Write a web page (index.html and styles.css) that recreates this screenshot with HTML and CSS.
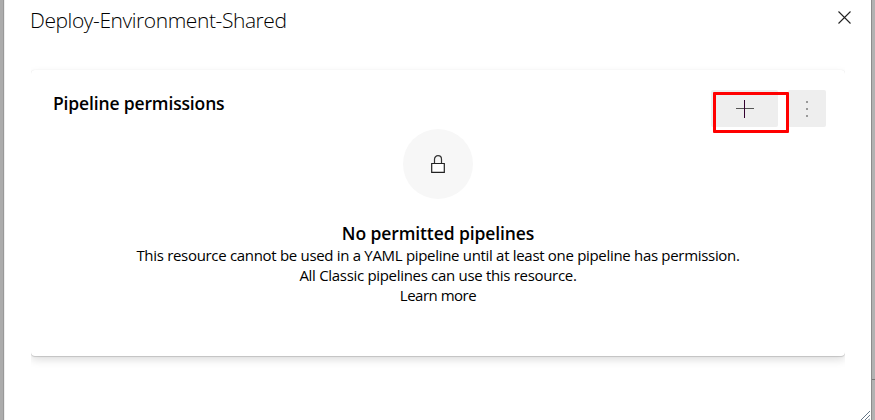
FILE: index.html
```html
<!DOCTYPE html>
<html lang="en">
  <head>
    <meta charset="utf-8" />
    <meta name="viewport" content="width=device-width, initial-scale=1.0" />
    <title>Deploy-Environment-Shared</title>
    <link rel="stylesheet" href="styles.css">
  </head>
  <body>
    <div class="panel">
      <div class="panel-header">
        <h1 class="panel-title">Deploy-Environment-Shared</h1>
        <button class="close-button" aria-label="Close">
          <svg width="13" height="13" viewBox="0 0 13 13">
            <path d="M.5 .5l12 12M12.5 .5l-12 12" />
          </svg>
        </button>
      </div>

      <div class="card-wrap">
        <div class="card">
          <div class="card-header">
            <h2 class="card-title">Pipeline permissions</h2>
            <div class="actions">
              <button class="button add-button" aria-label="Add pipeline">
                <svg width="18" height="18" viewBox="0 0 18 18">
                  <path class="plus-h" d="M0 8.5h18" />
                  <path class="plus-v" d="M8.5 0v18" />
                </svg>
                <span class="highlight"></span>
              </button>
              <button class="button more-button" aria-label="More options">
                <svg width="2" height="16" viewBox="0 0 2 16">
                  <path d="M0 0h2v2H0zM0 7h2v2H0zM0 14h2v2H0z" />
                </svg>
              </button>
            </div>
          </div>

          <div class="empty">
            <div class="empty-icon">
              <svg width="14" height="18" viewBox="0 0 14 18">
                <path class="shackle" d="M3.5 8V4.2a3.5 3.5 0 0 1 7 0V8" />
                <path class="lock-body" d="M.7 8.5h12.6v8.8H.7z" />
              </svg>
            </div>
            <div class="empty-title">No permitted pipelines</div>
            <div class="empty-text">This resource cannot be used in a YAML pipeline until at least one pipeline has permission.</div>
            <div class="empty-text">All Classic pipelines can use this resource.</div>
            <a class="empty-text empty-link">Learn more</a>
          </div>
        </div>
      </div>

      <svg class="resize-grip" width="9" height="9" viewBox="0 0 9 9">
        <path d="M0 9L9 0M4 9l5-5M7.5 9L9 7.5" />
      </svg>
    </div>
    <div class="page-edge"></div>
  </body>
</html>
```

FILE: styles.css
```css
* {
  box-sizing: border-box;
}

body {
  margin: 0;
  height: 420px;
  display: flex;
  overflow: hidden;
  background-color: #acacac;
  color: #000000;
  font-family: "Open Sans", "Noto Sans", sans-serif;
}

.panel {
  position: relative;
  flex: 1;
  margin-left: 3px;
  border-left: 1px solid #999999;
  background-color: #ffffff;
  box-shadow: inset 1px 0 #eeeeee;
}

.page-edge {
  width: 4px;
  border-left: 1px solid #8c8c8c;
  background: linear-gradient(#777777, #777777) 0 379px / 4px 1px no-repeat #b2b2b2;
}

.panel-header {
  display: flex;
  justify-content: space-between;
  height: 60px;
  padding: 6px 20px 0 26px;
}

.panel-title {
  margin: 0;
  font-size: 21px;
  font-weight: 300;
  line-height: 28px;
  letter-spacing: -0.42px;
}

.close-button {
  display: flex;
  height: 13px;
  margin-top: 5px;
  padding: 0;
  border: none;
  background: none;
}

.close-button path {
  stroke: #222222;
  stroke-width: 1.1;
}

/* the sides of the card shadow are cut off here */
.card-wrap {
  margin: 0 26px 0 27px;
  padding: 10px 0 16px;
  overflow: hidden;
}

.card {
  height: 286px;
  padding: 20px 19px 0 22px;
  border-radius: 4px;
  box-shadow: 0 0 1px rgba(0, 0, 0, 0.12), 0 1px 1px rgba(0, 0, 0, 0.14), 0 4px 8px rgba(0, 0, 0, 0.13);
}

.card-header {
  display: flex;
  justify-content: space-between;
  height: 39px;
}

.card-title {
  margin: 0;
  font-size: 17.5px;
  font-weight: 600;
  line-height: 27px;
  letter-spacing: -0.15px;
}

.actions {
  display: flex;
  gap: 10px;
}

.button {
  display: flex;
  height: 37px;
  padding: 0;
  border: none;
  border-radius: 2px;
  background-color: #eeeeee;
}

.add-button {
  position: relative;
  width: 67px;
  padding: 10px 0 0 25px;
}

.plus-h {
  stroke: #555555;
}

.plus-v {
  stroke: #33002f;
}

.highlight {
  position: absolute;
  top: 2px;
  left: 2px;
  width: 76px;
  height: 41px;
  border: 3px solid #ff0000;
  border-radius: 1px;
}

.more-button {
  width: 38px;
  padding: 11px 0 0 18px;
}

.more-button path {
  fill: #999999;
}

.empty {
  display: flex;
  flex-direction: column;
  align-items: center;
  margin-right: 3px;
}

.empty-icon {
  display: flex;
  justify-content: center;
  width: 70px;
  height: 70px;
  margin-bottom: 22px;
  padding-top: 26px;
  border-radius: 50%;
  background-color: #f7f7f7;
}

.shackle {
  fill: none;
  stroke: #333333;
  stroke-width: 1.2;
}

.lock-body {
  fill: #ffffff;
  stroke: #222222;
  stroke-width: 1.2;
}

.empty-title {
  font-size: 17.5px;
  font-weight: 600;
  line-height: 24px;
  letter-spacing: -0.1px;
}

.empty-text {
  font-size: 15px;
  line-height: 20px;
  letter-spacing: -0.31px;
  white-space: nowrap;
}

.empty-link {
  letter-spacing: -0.5px;
}

.resize-grip {
  position: absolute;
  right: 1px;
  bottom: 0;
}

.resize-grip path {
  stroke: #667788;
}
```
